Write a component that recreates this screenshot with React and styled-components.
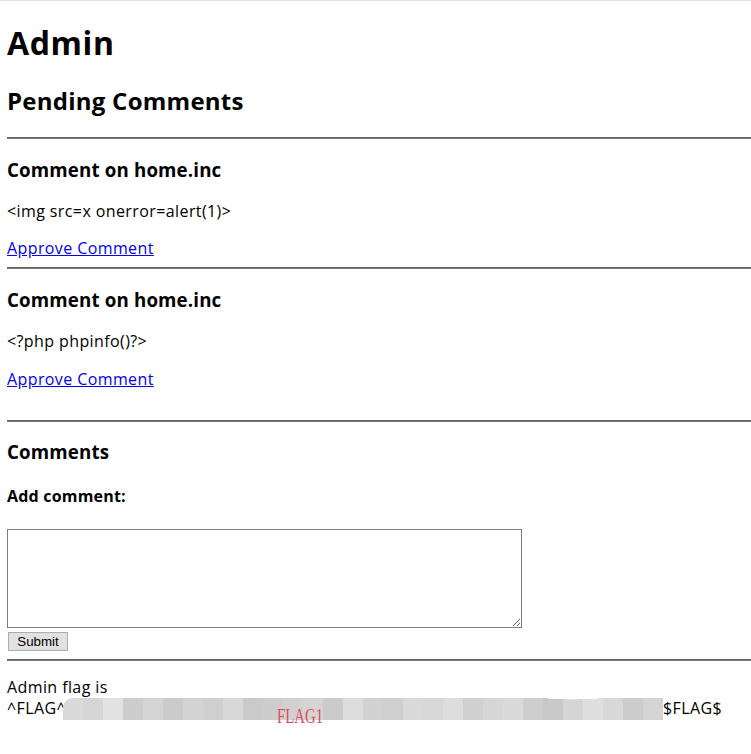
import React from 'react';
import styled, { createGlobalStyle } from 'styled-components';

const GlobalStyle = createGlobalStyle`
   html {
      border-top: 1px solid #e2e2e2;
      background: #fff;
   }
   body {
      margin: 0 0 8px 7px;
      font-family: 'Open Sans', 'Noto Sans', sans-serif;
      line-height: 1.32;
      letter-spacing: 0.4px;
      color: #000;
   }
`;

const Title = styled.h1`
   font-size: 32px;
   letter-spacing: 0.6px;
   margin: 21px 0;
`;

const SectionTitle = styled.h2`
   font-size: 24px;
   letter-spacing: 0.25px;
   margin: 20px 0;
`;

const Divider = styled.hr`
   margin: 8px 0;
   height: 0;
   border: none;
   border-top: 1px solid #646464;
   border-bottom: 1px solid #7a7a7a;
`;

const CommentTitle = styled.h3`
   font-size: 18.72px;
   letter-spacing: 0.15px;
   margin: 18.72px 0;
`;

const CommentBody = styled.p`
   font-size: 16px;
   margin: 16px 0;
`;

const ApproveLink = styled.a`
   display: block;
   width: fit-content;
   color: #0000ee;
   text-decoration: underline;
   font-size: 16px;
   margin-bottom: ${(props) => (props.$last ? '30px' : '0')};
`;

const FormLabel = styled.h4`
   font-size: 16px;
   letter-spacing: 0.2px;
   margin: 21.28px 0;
`;

const CommentForm = styled.form`
   margin: 0;
`;

const CommentBox = styled.textarea`
   display: block;
   box-sizing: border-box;
   width: 515px;
   height: 99px;
   margin: 0;
   border: 1px solid #7d7d7d;
   resize: vertical;
   font-family: 'Liberation Mono', monospace;
`;

const SubmitButton = styled.button`
   display: block;
   box-sizing: border-box;
   height: 19px;
   width: 60px;
   padding: 0;
   margin: 4px 0 2px 1px;
   font-family: 'Liberation Sans', Arial, sans-serif;
   font-size: 13.33px;
   letter-spacing: 0;
   line-height: 15px;
   color: #000;
   background: #e1e1e1;
   border: 1px solid #adadad;
   border-radius: 0;
`;

const FlagText = styled.p`
   font-size: 16px;
   margin: 16px 0;
`;

const FlagLine = styled.span`
   position: relative;
   white-space: nowrap;
`;

const mosaic = ['#d9d9d9', '#d6d6d6', '#e2e2e2', '#cdcdcd', '#d4d4d4', '#cbcbcb', '#d3d3d3', '#cfcfcf', '#d8d8d8', '#cacaca', '#cdcdcd', '#d1d1d1', '#d4d4d4', '#cbcbcb', '#dcdcdc', '#d2d2d2', '#cfcfcf', '#d9d9d9', '#d7d7d7', '#dddddd', '#d0d0d0', '#d6d6d6', '#dadada', '#cecece', '#c9c9c9', '#d5d5d5', '#dfdfdf', '#d8d8d8', '#cccccc', '#d4d4d4', '#d7d7d7'];

const mosaicGradient = mosaic
   .map((c, i) => `${c} ${i * 20}px ${(i + 1) * 20}px`)
   .join(', ');

const Redacted = styled.span`
   display: inline-block;
   width: 600px;
   height: 22px;
   vertical-align: -6px;
   margin-left: -3px;
   border-radius: 10px 0 0 0;
   background:
      radial-gradient(ellipse 70px 9px at 510px -4px, #fff 60%, transparent 62%),
      linear-gradient(to right, ${mosaicGradient});
`;

const Watermark = styled.span`
   position: absolute;
   left: 270px;
   top: 6px;
   font-family: 'Liberation Serif', serif;
   font-size: 20px;
   letter-spacing: 0;
   color: #e2485f;
   transform: scaleX(0.74);
   transform-origin: left center;
`;

const comments = [
   { page: 'home.inc', body: '<img src=x onerror=alert(1)>' },
   { page: 'home.inc', body: '<?php phpinfo()?>' },
];

export default function App() {
   return (
      <>
         <GlobalStyle />
         <Title>Admin</Title>
         <SectionTitle>Pending Comments</SectionTitle>
         <Divider />
         {comments.map((c, i) => (
            <React.Fragment key={i}>
               <CommentTitle>Comment on {c.page}</CommentTitle>
               <CommentBody>{c.body}</CommentBody>
               <ApproveLink href="#" $last={i === comments.length - 1}>
                  Approve Comment
               </ApproveLink>
               <Divider />
            </React.Fragment>
         ))}
         <CommentTitle>Comments</CommentTitle>
         <FormLabel>Add comment:</FormLabel>
         <CommentForm onSubmit={(e) => e.preventDefault()}>
            <CommentBox />
            <SubmitButton type="submit">Submit</SubmitButton>
         </CommentForm>
         <Divider />
         <FlagText>
            Admin flag is
            <br />
            <FlagLine>
               ^FLAG^<Redacted />$FLAG$
               <Watermark>FLAG1</Watermark>
            </FlagLine>
         </FlagText>
      </>
   );
}
